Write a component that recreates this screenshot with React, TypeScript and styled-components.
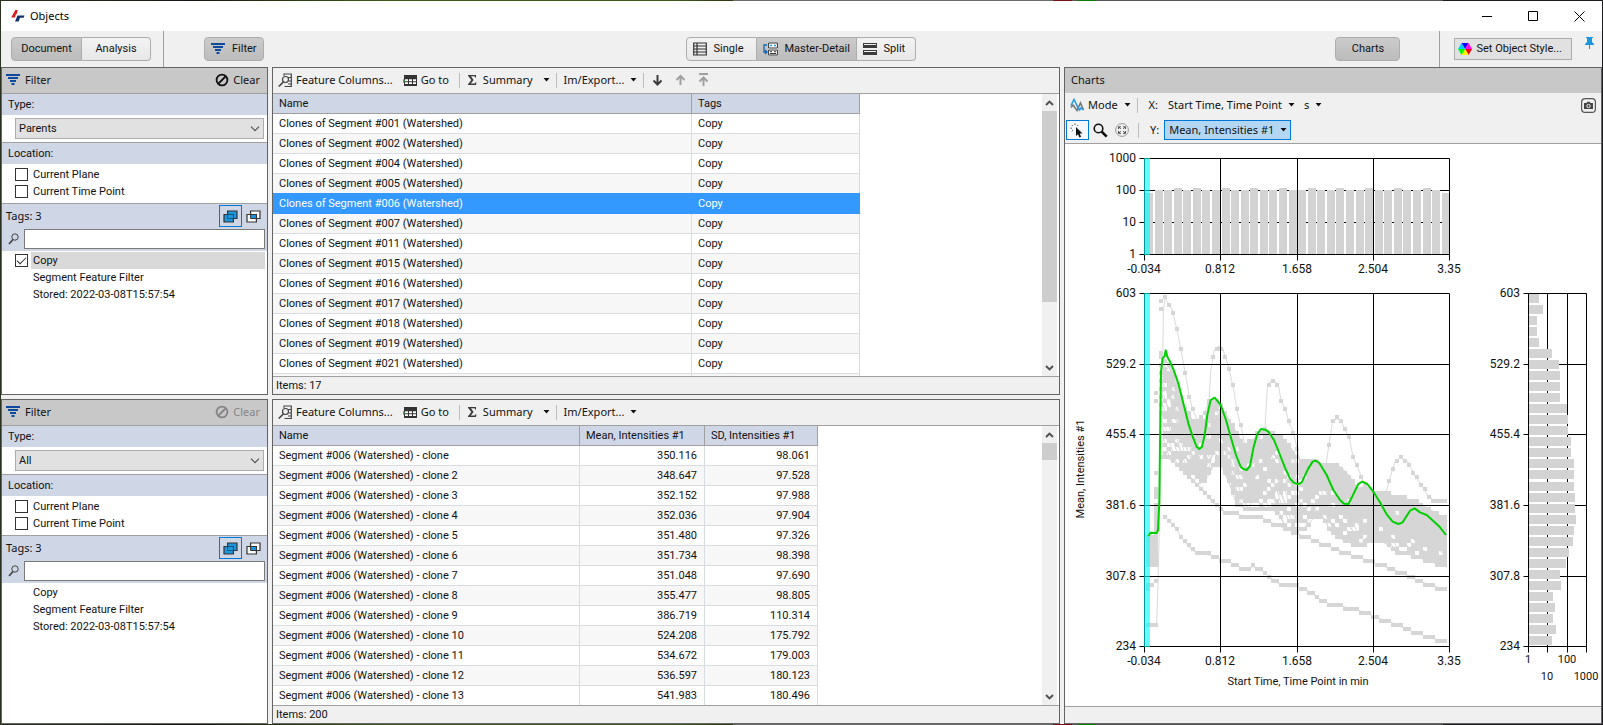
import React from 'react';
import styled, { createGlobalStyle, css } from 'styled-components';

const dense = `Roboto, "Liberation Sans", sans-serif`;
const ui = `"Noto Sans", "Open Sans", sans-serif`;
const line = '#a0a0a0';
const edge = '#646464';

const Global = createGlobalStyle`
  * { box-sizing: border-box; }
  body { margin: 0; background: #f0f0f0; color: #111; font: 11px/16px ${dense}; }
  button, select, input { font: inherit; color: inherit; margin: 0; }
  svg { display: block; flex: none; }
`;

/* ---------- frame ---------- */
const Window = styled.div`
  height: 100vh;
  min-height: 480px;
  padding: 1px;
  display: flex;
  flex-direction: column;
  background: linear-gradient(90deg, #2b3320 0, #14160f 12%, #3f5a17 24%, #3f5a17 42%, #2c3612 45.7%, #6b6b6b 45.7%,
    #6b6b6b 65.7%, #7a1018 65.7%, #7a1018 66.9%, #5a5a5a 66.9%, #5a5a5a 67.2%, #0b7a0b 67.2%, #0b7a0b 68.4%,
    #555 68.4%, #555 90%, #1c1c20 90%);
`;
const TitleBar = styled.header`
  height: 30px;
  flex: none;
  display: flex;
  align-items: center;
  padding-left: 9px;
  background: #fff;
  color: #000;
`;
const Title = styled.h1`
  flex: 1;
  margin: 0 0 0 5px;
  font: 400 11px/16px ${ui};
`;
const WindowButton = styled.button`
  width: 46px;
  height: 30px;
  display: grid;
  place-items: center;
  padding: 0;
  border: 0;
  background: none;
`;
const CommandBar = styled.div`
  height: 36px;
  flex: none;
  display: grid;
  grid-template-columns: 1fr auto 1fr;
  align-items: center;
  padding-right: 2px;
  background: #f0f0f0;
`;
const BarSide = styled.div<{ $end?: boolean }>`
  height: 36px;
  display: flex;
  align-items: center;
  justify-content: ${p => (p.$end ? 'flex-end' : 'flex-start')};
  padding-left: 10px;
`;
const BarRule = styled.div<{ $before: number; $after: number }>`
  width: 1px;
  align-self: stretch;
  background: ${line};
  margin: 0 ${p => p.$after}px 0 ${p => p.$before}px;
`;
const Segments = styled.div`
  display: flex;
`;
const Segment = styled.button<{ $on?: boolean; $icon?: boolean; $width: number }>`
  height: 24px;
  width: ${p => p.$width}px;
  display: flex;
  align-items: center;
  justify-content: ${p => (p.$icon ? 'flex-start' : 'center')};
  gap: 7px;
  padding: 0 0 0 ${p => (p.$icon ? 6 : 0)}px;
  border: 1px solid #adadad;
  background: ${p => (p.$on ? 'linear-gradient(#cbcbcb, #bcbcbc)' : 'linear-gradient(#f3f3f3, #e8e8e8)')};
  & + & { border-left: 0; }
  &:first-child { border-radius: 4px 0 0 4px; }
  &:last-child { border-radius: 0 4px 4px 0; }
  &:only-child { border-radius: 4px; }
`;
const StyleButton = styled.button`
  height: 22px;
  display: flex;
  align-items: center;
  gap: 4px;
  padding: 0 9px 0 3px;
  border: 1px solid #adadad;
  background: #e1e1e1;
`;
const PinButton = styled.button`
  align-self: flex-start;
  padding: 6px 6px 0 13px;
  border: 0;
  background: none;
`;

/* ---------- panels ---------- */
const Workspace = styled.main`
  flex: 1;
  min-height: 0;
  display: grid;
  grid-template-columns: 267px minmax(0, 1fr) 538px;
  grid-template-rows: 328fr 325fr;
  gap: 4px;
  background: #f0f0f0;
`;
const Panel = styled.section<{ $tall?: boolean }>`
  min-height: 0;
  min-width: 0;
  display: flex;
  flex-direction: column;
  overflow: hidden;
  border: 1px solid ${edge};
  background: #fff;
  ${p => p.$tall && css`grid-column: 3; grid-row: 1 / 3;`}
`;
const PanelHeader = styled.div<{ $ruled?: boolean }>`
  height: ${p => (p.$ruled ? 26 : 25)}px;
  flex: none;
  display: flex;
  align-items: center;
  gap: 5px;
  padding: 0 7px 1px ${p => (p.$ruled ? 4 : 6)}px;
  background: #c8c8c8;
  border-bottom: ${p => (p.$ruled ? `1px solid ${line}` : '0')};
  font-family: ${ui};
`;
const PanelTitle = styled.h2`
  flex: 1;
  margin: 0;
  font: inherit;
`;
const ClearButton = styled.button`
  display: flex;
  align-items: center;
  gap: 4px;
  padding: 0;
  border: 0;
  background: none;
  &:disabled { color: #858585; }
`;
const Caption = styled.div<{ $ruled?: boolean }>`
  height: ${p => (p.$ruled ? 22 : 21)}px;
  flex: none;
  display: flex;
  align-items: center;
  padding-left: 6px;
  background: #cfd6e6;
  border-top: ${p => (p.$ruled ? `1px solid ${line}` : '0')};
`;
const ComboRow = styled.div`
  display: grid;
  padding: 3px 3px 3px 13px;
  align-items: center;
  & > * { grid-area: 1 / 1; }
  & > svg { justify-self: end; margin-right: 4px; pointer-events: none; }
`;
const Combo = styled.select`
  width: 100%;
  height: 21px;
  padding: 0 3px;
  appearance: none;
  border: 1px solid #adadad;
  border-radius: 0;
  background: #e1e1e1;
`;
const CheckList = styled.div`
  display: flex;
  flex-direction: column;
  padding: 2px 0 3px 13px;
`;
const CheckLabel = styled.label`
  height: 17px;
  display: flex;
  align-items: center;
  gap: 5px;
`;
const Check = styled.input`
  width: 13px;
  height: 13px;
  flex: none;
  appearance: none;
  display: grid;
  place-items: center;
  border: 1px solid #333;
  background: #fff;
  &:checked::before {
    content: '';
    width: 8px;
    height: 4px;
    margin-bottom: 2px;
    border: solid #333;
    border-width: 0 0 1px 1px;
    transform: rotate(-45deg);
  }
`;
const TagHead = styled.div`
  flex: none;
  padding: 1px 2px 2px 4px;
  background: #cfd6e6;
  border-top: 1px solid ${line};
`;
const TagBar = styled.div`
  height: 22px;
  display: flex;
  align-items: center;
  font-family: ${ui};
`;
const TagCount = styled.span`
  flex: 1;
  padding-bottom: 1px;
`;
const ModeToggle = styled.button<{ $on?: boolean }>`
  width: 23px;
  height: 22px;
  display: grid;
  place-items: center;
  padding: 0;
  border: 1px solid ${p => (p.$on ? '#0078d7' : 'transparent')};
  background: none;
`;
const SearchRow = styled.label`
  display: flex;
  align-items: center;
  gap: 5px;
  padding: 2px 0 0 2px;
`;
const SearchBox = styled.input`
  flex: 1;
  min-width: 0;
  height: 20px;
  padding: 0 4px;
  border: 1px solid #7a7a7a;
  background: #fff;
`;
const TagList = styled.div`
  padding: 1px 2px 0 13px;
`;
const TagName = styled.span<{ $on?: boolean; $inset?: boolean }>`
  flex: 1;
  height: 17px;
  margin-left: ${p => (p.$inset ? 16 : -2)}px;
  padding-left: 2px;
  line-height: 17px;
  background: ${p => (p.$on ? '#d9d9d9' : 'none')};
`;
const TagNote = styled.div`
  padding-left: 18px;
  line-height: 17px;
`;

/* ---------- tool bars ---------- */
const ToolRow = styled.div<{ $ruled?: boolean }>`
  height: ${p => (p.$ruled ? 26 : 25)}px;
  flex: none;
  display: flex;
  align-items: center;
  padding-bottom: 1px;
  background: #f0f0f0;
  border-bottom: ${p => (p.$ruled ? `1px solid ${line}` : '0')};
  font-family: ${ui};
`;
const ToolButton = styled.button<{ $menu?: boolean }>`
  display: flex;
  align-items: center;
  gap: 4px;
  padding: 0 ${p => (p.$menu ? 1 : 5)}px 0 5px;
  border: 0;
  background: none;
  white-space: nowrap;
`;
const CaretSlot = styled.span<{ $split?: boolean }>`
  margin-left: ${p => (p.$split ? 6 : 2)}px;
`;
const ToolRule = styled.span`
  width: 1px;
  height: 15px;
  margin: 0 2px 0 5px;
  background: #bdbdbd;
`;
const AxisLabel = styled.label`
  margin: 0 5px 0 9px;
`;
const AxisPick = styled.span`
  display: grid;
  align-items: center;
  & > * { grid-area: 1 / 1; }
  & > svg { justify-self: end; margin-right: 4px; pointer-events: none; }
`;
const AxisSelect = styled.select<{ $on?: boolean }>`
  height: 20px;
  padding: 0 15px 0 4px;
  appearance: none;
  border: 1px solid ${p => (p.$on ? '#0078d7' : 'transparent')};
  border-radius: 0;
  background: ${p => (p.$on ? '#b3d7f3' : 'transparent')};
`;
const IconButton = styled.button<{ $on?: boolean; $push?: boolean }>`
  width: ${p => (p.$on ? 23 : 22)}px;
  height: 20px;
  display: grid;
  place-items: center;
  padding: 0;
  border: 1px solid ${p => (p.$on ? '#0078d7' : 'transparent')};
  background: ${p => (p.$on ? '#f5f9fd' : 'none')};
  margin-left: ${p => (p.$push ? 'auto' : '0')};
  margin-right: ${p => (p.$push ? 2 : 0)}px;
`;
const IconGroup = styled.div`
  display: flex;
  padding-left: 1px;
`;

/* ---------- tables ---------- */
const TableArea = styled.div`
  flex: 1;
  min-height: 0;
  display: flex;
`;
const TableView = styled.div`
  flex: 1;
  min-width: 0;
  overflow: hidden;
`;
const Grid = styled.table`
  border-spacing: 0;
  table-layout: fixed;
  width: 0;
`;
const Head = styled.th<{ $width: number }>`
  width: ${p => p.$width}px;
  height: 20px;
  padding: 0 6px;
  text-align: left;
  font-weight: 400;
  line-height: 18px;
  background: #cfd6e6;
  border: solid ${line};
  border-width: 0 1px 1px 0;
`;
const Row = styled.tr<{ $on?: boolean }>`
  background: ${p => (p.$on ? '#3399ff' : '#fff')};
  color: ${p => (p.$on ? '#fff' : 'inherit')};
  &:nth-child(even) { background: #f7f7f7; }
`;
const Cell = styled.td<{ $num?: boolean; $on?: boolean }>`
  height: 20px;
  padding: 0 ${p => (p.$num ? 7 : 6)}px;
  line-height: 18px;
  white-space: nowrap;
  text-align: ${p => (p.$num ? 'right' : 'left')};
  border: solid ${p => (p.$on ? '#3399ff' : '#d9dce0')};
  border-width: 0 1px 1px 0;
  box-shadow: ${p => (p.$on ? '0 -1px 0 #3399ff' : 'none')};
`;
const ScrollTrack = styled.div`
  width: 15px;
  margin-right: 2px;
  display: grid;
  grid-template-rows: 17px 1fr 17px;
  justify-items: center;
  align-items: center;
  background: #f0f0f0;
`;
const ScrollThumb = styled.div<{ $share: string }>`
  width: 15px;
  height: ${p => p.$share};
  align-self: start;
  background: #cdcdcd;
`;
const Status = styled.footer<{ $short?: boolean }>`
  height: ${p => (p.$short ? 17 : 18)}px;
  flex: none;
  padding: 1px 0 0 3px;
  background: #f0f0f0;
  border-top: 1px solid ${line};
`;

/* ---------- icons ---------- */
const Caret = () => <svg width="7" height="4"><path d="M.5 0h6L3.500 3.500z" fill="#111" /></svg>;
const Chevron = () => <svg width="10" height="6"><path d="M1 .7 5 4.700 9 .7" fill="none" stroke="#555" strokeWidth="1.200" /></svg>;
const FilterIcon = () => (
  <svg width="14" height="12"><path d="M0 0h14v2H0zM2 3h10v2H2zM4 6h6v2H4zM5.500 9h3v2h-3z" fill="#0d4a9e" /></svg>
);
const ClearIcon = () => (
  <svg width="14" height="14" fill="none" stroke="currentColor" strokeWidth="1.800">
    <circle cx="7" cy="7" r="5.400" /><path d="M3.500 10.500l7-7" />
  </svg>
);
const Logo = () => (
  <svg width="15" height="14">
    <path d="M5.300 1h2.500L6.500 5.500H5.800L5 8.500H1.200z" fill="#d6201c" />
    <path d="M7.500 6.500h7l-.9 2.300H10L8.700 12.500H5z" fill="#12306e" />
  </svg>
);
const SingleIcon = () => (
  <svg width="14" height="14" fill="none" stroke="#333" strokeWidth="1.200">
    <path d="M.7 1h12.600v12H.7zM4 1v12M.7 4h12.600M.7 7h12.600M.7 10h12.600" />
  </svg>
);
const MasterIcon = () => (
  <svg width="15" height="14" fill="none">
    <path d="M5.500.5h9v13h-9z" fill="#fff" />
    <path d="M4 3H1v7h2M2 8l2 2-2 2" stroke="#1267b4" strokeWidth="1.300" />
    <path d="M5.600 1h8.800v5H5.600zM5.600 8h8.800v5H5.600zM7 9.700h2M11 9.700h2M7 11.500h6" stroke="#333" />
    <path d="M7 3.500h2M11 3.500h2" stroke="#1ba1e2" strokeWidth="1.500" />
  </svg>
);
const SplitIcon = () => (
  <svg width="14" height="14"><path d="M0 1h14v5H0zM0 8h14v5H0z" fill="#3c3c3c" /><path d="M1 2h12v1H1zM1 9h12v1H1z" fill="#f0f0f0" /></svg>
);
const ColorIcon = () => (
  <svg width="14" height="14">
    <path d="M7 7 3.500 1h7z" fill="#10f" /><path d="M7 7l3.500-6L14 7z" fill="#f0f" />
    <path d="M7 7h7l-3.500 6z" fill="#f00" /><path d="M7 7l3.500 6h-7z" fill="#ff0" />
    <path d="M7 7l-3.500 6L0 7z" fill="#0f0" /><path d="M7 7H0l3.500-6z" fill="#0cf" />
  </svg>
);
const PinIcon = () => (
  <svg width="9" height="13"><path d="M1 0h7v1H7v4l2 2v1H0V7l2-2V1H1z" fill="#1c97de" /><path d="M4 8h1v4H4z" fill="#777" /></svg>
);
const TagsOverlap = ({ all }: { all?: boolean }) => (
  <svg width="15" height="13" stroke="#333" strokeWidth="1.200">
    <path d="M4.600 1h9.400v7.500H4.600z" fill={all ? '#1c97de' : '#fff'} />
    <path d="M1 4.500h9.400V12H1z" fill={all ? '#1c97de' : '#fff'} />
    <path d="M4.600 4.500h5.800v4H4.600z" fill="#1c97de" strokeWidth={all ? 0.8 : 1} stroke={all ? '#0d4f78' : '#333'} />
  </svg>
);
const SearchIcon = () => (
  <svg width="11" height="12" fill="none" stroke="#444"><circle cx="7" cy="4" r="3.200" /><path d="M5 6.500 1 11" strokeWidth="1.700" /></svg>
);
const ColumnsIcon = () => (
  <svg width="14" height="15" fill="none" stroke="#444" strokeWidth="1.200">
    <path d="M6 2.800V1h7.300v12.500H6.500M10 4.500h3M11 8h2M10 11h3" />
    <circle cx="7.500" cy="6.500" r="3" /><path d="M5.300 9 .8 13.500" strokeWidth="1.700" />
  </svg>
);
const GotoIcon = () => (
  <svg width="14" height="13">
    <path d="M1 1h13v11H1z" fill="#333" />
    <path d="M2 5.200h3v2H2zM6 5.200h3v2H6zM10 5.200h3v2h-3zM2 8.300h3v1.700H2zM6 8.300h3v1.700H6zM10 8.300h3v1.700h-3z" fill="#fff" />
    <path d="M0 5 2.500 7 0 9z" fill="#3fa33f" />
  </svg>
);
const SumIcon = () => (
  <svg width="12" height="12"><path d="M1 1h8v2.500H8.200L7.600 2.300H4L6.600 6 3.800 9.500h4l.8-1.300h.8L9 11H1v-.8L4.300 6 1 1.800z" fill="#3c3c3c" /></svg>
);
const Arrow = ({ up, bar }: { up?: boolean; bar?: boolean }) => (
  <svg width="13" height="14" fill="none" stroke={up ? '#a0a0a0' : '#3c3c3c'} strokeWidth="2">
    <path d={up ? (bar ? 'M2 1h9M6.500 13V5M2.500 8.500l4-4 4 4' : 'M6.500 12V3M2.500 7l4-4 4 4') : 'M6.500 2v9M2.500 7.500l4 4 4-4'} />
  </svg>
);
const ModeIcon = () => (
  <svg width="14" height="14" fill="none" strokeWidth="1.600">
    <path d="M1 9.500 3 7l4 5.500L10.500 5l3 7" stroke="#777" />
    <path d="M1 7.500 4 1.500l4.500 9 1 1.500 1.500-2 2.500 2" stroke="#2b9be0" />
  </svg>
);
const PointerIcon = () => (
  <svg width="15" height="15">
    <path d="M6 4v9l2-1.800L9.400 14.500l1.700-.7L9.700 10.600H12.500z" fill="#111" />
    <path d="M5 .5v1.500M1.800 2l1 1M8.200 2l-1 1M.5 5.200H2M1.800 8.200l1-1" stroke="#555" />
  </svg>
);
const ZoomIcon = () => (
  <svg width="15" height="15" fill="none" stroke="#111"><circle cx="5.500" cy="5.500" r="4.300" strokeWidth="1.600" /><path d="M8.700 8.700l5 5" strokeWidth="2.600" /></svg>
);
const FitIcon = () => (
  <svg width="14" height="14" fill="none" stroke="#777">
    <circle cx="7" cy="7" r="6.400" stroke="#999" />
    <path d="M3.500 6V3.800H6M3.600 3.800 5.800 6M8 3.800h2.500V6M10.400 3.800 8.200 6M3.500 8v2.400H6M3.600 10.400 5.800 8M8 10.400h2.500V8M10.400 10.400 8.200 8" stroke="#555" />
  </svg>
);
const CameraIcon = () => (
  <svg width="15" height="15" fill="none">
    <rect x=".6" y=".6" width="13.800" height="13.800" rx="3.500" stroke="#555" strokeWidth="1.200" />
    <path d="M3 5h2.500l.8-1.300h2.400L9.500 5H12v6H3z" fill="#444" /><circle cx="7.500" cy="8" r="1.700" stroke="#f0f0f0" />
  </svg>
);
const ScrollArrow = ({ down }: { down?: boolean }) => (
  <svg width="9" height="6"><path d={down ? 'M1 1l3.500 3.500L8 1' : 'M1 5l3.500-3.500L8 5'} fill="none" stroke="#505050" strokeWidth="1.900" /></svg>
);

/* ---------- chart data: traces are digitised at three units per pixel ---------- */
type Pt = [number, number];
const pts = (flat: number[]): Pt[] => flat.reduce<Pt[]>((a, v, i) => (i % 2 ? a : [...a, [v, flat[i + 1]] as Pt]), []);

const selected = pts([55,753,62,743,80,744,84,735,88,650,91,400,93,260,98,220,104,213,107,196,112,215,120,230,131,255,145,295,160,355,175,415,188,455,200,485,208,492,216,485,224,450,232,390,242,345,254,338,262,348,272,360,288,405,302,455,318,510,332,545,340,552,350,555,360,543,370,490,382,447,393,432,405,434,415,440,432,465,450,510,465,548,480,580,490,592,504,598,515,592,535,550,548,530,556,527,568,534,590,570,610,615,630,645,642,656,655,657,668,632,685,597,697,590,712,597,730,620,750,652,770,688,788,710,805,717,818,712,840,677,854,670,870,682,890,690,910,708,930,727,948,750]);
const highest = pts([98,230,100,80,105,40,117,58,128,78,141,135,153,195,165,260,177,330,190,380,205,410,225,380,237,350,242,260,253,195,265,183,278,190,297,250,310,310,322,380,334,430,345,480,360,470,385,450,405,430,412,305,422,288,434,288,445,300,453,345,465,370,480,420,490,440,503,500,515,540,560,560,585,560,598,470,608,410,622,400,635,412,658,460,670,520,682,545,700,590,730,620,765,630,780,580,795,530,812,518,838,535,852,570,875,600,895,635,920,650,950,652]);
const second = pts([98,510,130,530,160,550,190,585,220,615,245,650,290,685,330,690,400,700,440,720,500,745,550,765,600,785,650,805,700,822,750,840,800,858,850,880,900,900,950,915]);
const lowest = pts([98,690,120,710,140,735,160,765,185,795,210,807,240,810,265,820,300,832,340,852,370,845,400,860,430,885,460,905,500,905,540,920,565,940,600,958,650,967,700,980,740,998,790,1015,840,1037,890,1055,950,1073]);
const upper = pts([93,215,115,225,140,290,165,365,185,400,205,412,225,400,240,345,260,345,280,370,300,405,320,440,340,475,360,480,380,445,400,435,455,450,480,480,505,520,550,528,630,540,660,570,680,605,730,620,800,630,850,645,880,660,950,700]);
const lower = pts([93,500,130,530,160,555,200,600,230,585,255,530,275,545,300,600,320,660,360,675,400,665,440,680,470,730,520,735,550,700,580,690,600,740,640,765,690,785,720,770,760,770,800,800,850,812,900,830,950,845]);

const at = (trace: Pt[], x: number) => {
  const i = Math.max(1, trace.findIndex(p => p[0] >= x));
  const [a, b] = [trace[i - 1], trace[i]];
  return a[1] + ((b[1] - a[1]) * (x - a[0])) / (b[0] - a[0]);
};
const cell = (x: number, y: number) => `M${x - 6} ${Math.round(y / 12) * 12 - 6}h12v12h-12z`;
const columns = Array.from({ length: 71 }, (_, i) => 105 + i * 12);
const cells = (trace: Pt[]) => columns.map(x => cell(x, at(trace, x))).join('');
const polyline = (trace: Pt[]) => 'M' + trace.map(p => p.join(' ')).join('L');

const traces = 30;
const band: Pt[][] = Array.from({ length: traces }, (_, k) =>
  [93, ...columns].map((x): Pt => {
    const top = at(upper, x);
    const share = k / (traces - 1);
    const wave = share < 1 ? 0.1 * Math.sin(x / 31 + k * 2.3) + 0.06 * Math.sin(x / 9 + k * 5.1) : 0;
    return [x, top + (at(lower, x) - top) * Math.min(1, Math.max(0.02, Math.pow(share, 1.4) + wave))];
  }),
);
const starts = [
  ...[750, 762, 774, 786, 798, 810, 822, 840].flatMap(y => [55, 67, 79].map((x): Pt => [x, y])),
  ...[905, 917].map((y): Pt => [55, y]), [67, 905], [79, 893], [55, 1025], [67, 1025], [79, 1015],
  ...[324, 348, 565, 615, 627, 639, 655, 667, 679, 691, 703, 715, 727, 739].map((y): Pt => [78, y]),
  ...[50, 75, 205, 217, 240, 265, 290, 310, 335, 360, 385, 520].map((y): Pt => [92, y]),
] as Pt[];
const greyCells = [...band, highest, second, lowest].map(cells).join('') + starts.map(([x, y]) => cell(x, y)).join('');
const greyLines = [...band, highest, second, lowest].map(polyline).join('') + 'M80 1015L84 900L92 560M55 1025L78 1015';

const gx = [79, 155, 232, 308, 384];
const gy = [149, 220, 290, 361, 432, 502];
const hy = [14, 46, 78, 110];
const sx = [463, 482, 502, 521];
const xLabels = ['-0.034', '0.812', '1.658', '2.504', '3.35'];
const yLabels = ['603', '529.2', '455.4', '381.6', '307.8', '234'];
const tallBars = [3, 5, 8, 11, 14, 17, 20, 23, 26, 29];
const sideBars = [10, 14, 8, 8, 10, 23, 30, 31, 31, 31, 38, 39, 39, 42, 42, 45, 45, 45, 46, 46, 47, 45, 44, 40, 37, 31, 32, 24, 26, 24, 27, 23];

const Canvas = styled.div`
  flex: 1;
  min-height: 0;
  background: #fff;
  & > svg { width: 100%; height: 100%; }
`;
const Tick = styled.text<{ $end?: boolean; $small?: boolean }>`
  font: ${p => (p.$small ? 11 : 12)}px ${dense};
  text-anchor: ${p => (p.$end ? 'end' : 'middle')};
  fill: #111;
`;

const Charts = () => (
  <Canvas>
    <svg viewBox="0 0 536 562" preserveAspectRatio="xMinYMin meet" role="img" aria-label="Mean intensity over time">
      <g transform="translate(.5 .5)" stroke="#000" fill="none">
        <path d={hy.map(y => `M74 ${y}H384`).join('')} />
        <path d={gy.map(y => `M458 ${y}H521`).join('') + sx.map(x => `M${x} 149V508`).join('')} />
      </g>
      {Array.from({ length: 32 }, (_, i) => {
        const top = tallBars.includes(i) ? 44 : i === 0 || i === 31 ? 49 : 46;
        return <rect key={i} x={Math.round(80 + i * 9.57)} y={top} width={i === 31 ? 7 : 8} height={110 - top} fill="#d3d3d3" />;
      })}
      {sideBars.map((w, i) => <rect key={i} x="464" y={Math.round(150 + i * 11.03)} width={w} height="9" fill="#d3d3d3" />)}
      <g transform="translate(65 141) scale(.33333)">
        <path d={greyLines} fill="none" stroke="#dadada" strokeWidth="3" />
        <path d={greyCells} fill="#d6d6d6" shapeRendering="crispEdges" />
      </g>
      <path d={gx.map(x => `M${x} 14V116M${x} 149V508`).join('') + gy.map(y => `M74 ${y}H384`).join('')} transform="translate(.5 .5)" stroke="#000" />
      <path d="M79 14h6v97h-6zM79 149h6v354h-6z" fill="#0ff" fillOpacity=".6" shapeRendering="crispEdges" />
      <path d={polyline(selected)} transform="translate(65 141) scale(.33333)" fill="none" stroke="#00d000" strokeWidth="6" strokeLinejoin="round" />
      {['1000', '100', '10', '1'].map((t, i) => <Tick key={t} $end x="71" y={hy[i] + 4}>{t}</Tick>)}
      {xLabels.map((t, i) => <Tick key={t} x={gx[i]} y="129">{t}</Tick>)}
      {xLabels.map((t, i) => <Tick key={t} x={gx[i]} y="521">{t}</Tick>)}
      {yLabels.map((t, i) => <Tick key={t} $end x="71" y={gy[i] + 4}>{t}</Tick>)}
      {yLabels.map((t, i) => <Tick key={t} $end x="455" y={gy[i] + 4}>{t}</Tick>)}
      {['1', '10', '100', '1000'].map((t, i) => <Tick key={t} $small x={sx[i]} y={i % 2 ? 536 : 519}>{t}</Tick>)}
      <Tick $small x="233" y="541">Start Time, Time Point in min</Tick>
      <Tick $small transform="translate(19 325) rotate(-90)">Mean, Intensities #1</Tick>
    </svg>
  </Canvas>
);

/* ---------- panels ---------- */
const FilterPanel = ({ id, type, active }: { id: string; type: string; active?: boolean }) => (
  <Panel>
    <PanelHeader $ruled>
      <FilterIcon /><PanelTitle>Filter</PanelTitle>
      <ClearButton disabled={!active}><ClearIcon />Clear</ClearButton>
    </PanelHeader>
    <Caption as="label" htmlFor={`${id}-type`}>Type:</Caption>
    <ComboRow>
      <Combo id={`${id}-type`} defaultValue={type}><option>{type}</option></Combo>
      <Chevron />
    </ComboRow>
    <Caption $ruled>Location:</Caption>
    <CheckList>
      <CheckLabel><Check type="checkbox" />Current Plane</CheckLabel>
      <CheckLabel><Check type="checkbox" />Current Time Point</CheckLabel>
    </CheckList>
    <TagHead>
      <TagBar>
        <TagCount>Tags: 3</TagCount>
        <ModeToggle $on aria-label="Match any tag"><TagsOverlap all /></ModeToggle>
        <ModeToggle aria-label="Match all tags"><TagsOverlap /></ModeToggle>
      </TagBar>
      <SearchRow><SearchIcon /><SearchBox type="text" aria-label="Search tags" /></SearchRow>
    </TagHead>
    <TagList>
      <CheckLabel>
        {active && <Check type="checkbox" defaultChecked />}
        <TagName $on={active} $inset={!active}>Copy</TagName>
      </CheckLabel>
      <TagNote>Segment Feature Filter</TagNote>
      <TagNote>Stored: 2022-03-08T15:57:54</TagNote>
    </TagList>
  </Panel>
);

const TableTools = ({ sortable }: { sortable?: boolean }) => (
  <ToolRow $ruled>
    <ToolButton><ColumnsIcon />Feature Columns...</ToolButton>
    <ToolButton><GotoIcon />Go to</ToolButton>
    <ToolRule />
    <ToolButton $menu><SumIcon />Summary<CaretSlot $split><Caret /></CaretSlot></ToolButton>
    <ToolRule />
    <ToolButton $menu>Im/Export...<CaretSlot><Caret /></CaretSlot></ToolButton>
    {sortable && (
      <>
        <ToolRule />
        <ToolButton aria-label="Move down"><Arrow /></ToolButton>
        <ToolButton aria-label="Move up"><Arrow up /></ToolButton>
        <ToolButton aria-label="Move to top"><Arrow up bar /></ToolButton>
      </>
    )}
  </ToolRow>
);

type Column = { title: string; width: number; num?: boolean };
const DataPanel = ({ columns: cols, rows, current, items, thumb, sortable }: {
  columns: Column[]; rows: string[][]; current?: number; items: number; thumb: string; sortable?: boolean;
}) => (
  <Panel>
    <TableTools sortable={sortable} />
    <TableArea>
      <TableView>
        <Grid>
          <thead><tr>{cols.map(c => <Head key={c.title} $width={c.width}>{c.title}</Head>)}</tr></thead>
          <tbody>
            {rows.map((r, i) => (
              <Row key={i} $on={i === current}>
                {r.map((v, j) => <Cell key={j} $num={cols[j].num} $on={i === current}>{v}</Cell>)}
              </Row>
            ))}
          </tbody>
        </Grid>
      </TableView>
      <ScrollTrack><ScrollArrow /><ScrollThumb $share={thumb} /><ScrollArrow down /></ScrollTrack>
    </TableArea>
    <Status>Items: {items}</Status>
  </Panel>
);

const parents = ['001', '002', '004', '005', '006', '007', '011', '015', '016', '017', '018', '019', '021']
  .map(n => [`Clones of Segment #${n} (Watershed)`, 'Copy']);
const clones = [
  ['350.116', '98.061'], ['348.647', '97.528'], ['352.152', '97.988'], ['352.036', '97.904'], ['351.480', '97.326'],
  ['351.734', '98.398'], ['351.048', '97.690'], ['355.477', '98.805'], ['386.719', '110.314'], ['524.208', '175.792'],
  ['534.672', '179.003'], ['536.597', '180.123'], ['541.983', '180.496'],
].map((v, i) => [`Segment #006 (Watershed) - clone${i ? ` ${i + 1}` : ''}`, ...v]);

export default function App() {
  return (
    <Window>
      <Global />
      <TitleBar>
        <Logo /><Title>Objects</Title>
        <WindowButton aria-label="Minimize"><svg width="10" height="10"><path d="M0 5h10v1H0z" /></svg></WindowButton>
        <WindowButton aria-label="Maximize"><svg width="10" height="10"><path d="M.5.5h9v9h-9z" fill="none" stroke="#000" /></svg></WindowButton>
        <WindowButton aria-label="Close"><svg width="11" height="11"><path d="M.5.5l10 10M10.500.5l-10 10" stroke="#000" /></svg></WindowButton>
      </TitleBar>
      <CommandBar>
        <BarSide>
          <Segments>
            <Segment $on $width={71}>Document</Segment>
            <Segment $width={69}>Analysis</Segment>
          </Segments>
          <BarRule $before={12} $after={40} />
          <Segments><Segment $on $icon $width={60}><FilterIcon />Filter</Segment></Segments>
        </BarSide>
        <Segments>
          <Segment $icon $width={71}><SingleIcon />Single</Segment>
          <Segment $on $icon $width={100}><MasterIcon />Master-Detail</Segment>
          <Segment $icon $width={59}><SplitIcon />Split</Segment>
        </Segments>
        <BarSide $end>
          <Segments><Segment $on $width={65}>Charts</Segment></Segments>
          <BarRule $before={39} $after={14} />
          <StyleButton><ColorIcon />Set Object Style...</StyleButton>
          <PinButton aria-label="Keep on top"><PinIcon /></PinButton>
        </BarSide>
      </CommandBar>
      <Workspace>
        <FilterPanel id="parents" type="Parents" active />
        <DataPanel sortable items={17} current={4} thumb="77%" rows={[...parents, ['', '']]}
          columns={[{ title: 'Name', width: 419 }, { title: 'Tags', width: 168 }]} />
        <Panel $tall>
          <PanelHeader><PanelTitle>Charts</PanelTitle></PanelHeader>
          <ToolRow>
            <ToolButton $menu><ModeIcon />Mode<CaretSlot><Caret /></CaretSlot></ToolButton>
            <ToolRule />
            <AxisLabel htmlFor="axis-x">X:</AxisLabel>
            <AxisPick><AxisSelect id="axis-x"><option>Start Time, Time Point</option></AxisSelect><Caret /></AxisPick>
            <AxisPick><AxisSelect aria-label="Time unit"><option>s</option></AxisSelect><Caret /></AxisPick>
            <IconButton $push aria-label="Snapshot"><CameraIcon /></IconButton>
          </ToolRow>
          <ToolRow $ruled>
            <IconGroup>
              <IconButton $on aria-label="Select"><PointerIcon /></IconButton>
              <IconButton aria-label="Zoom"><ZoomIcon /></IconButton>
              <IconButton aria-label="Fit"><FitIcon /></IconButton>
            </IconGroup>
            <ToolRule />
            <AxisLabel htmlFor="axis-y">Y:</AxisLabel>
            <AxisPick><AxisSelect id="axis-y" $on><option>Mean, Intensities #1</option></AxisSelect><Caret /></AxisPick>
          </ToolRow>
          <Charts />
          <Status $short />
        </Panel>
        <FilterPanel id="clones" type="All" />
        <DataPanel items={200} thumb="17px" rows={clones}
          columns={[{ title: 'Name', width: 307 }, { title: 'Mean, Intensities #1', width: 125, num: true }, { title: 'SD, Intensities #1', width: 113, num: true }]} />
      </Workspace>
    </Window>
  );
}
